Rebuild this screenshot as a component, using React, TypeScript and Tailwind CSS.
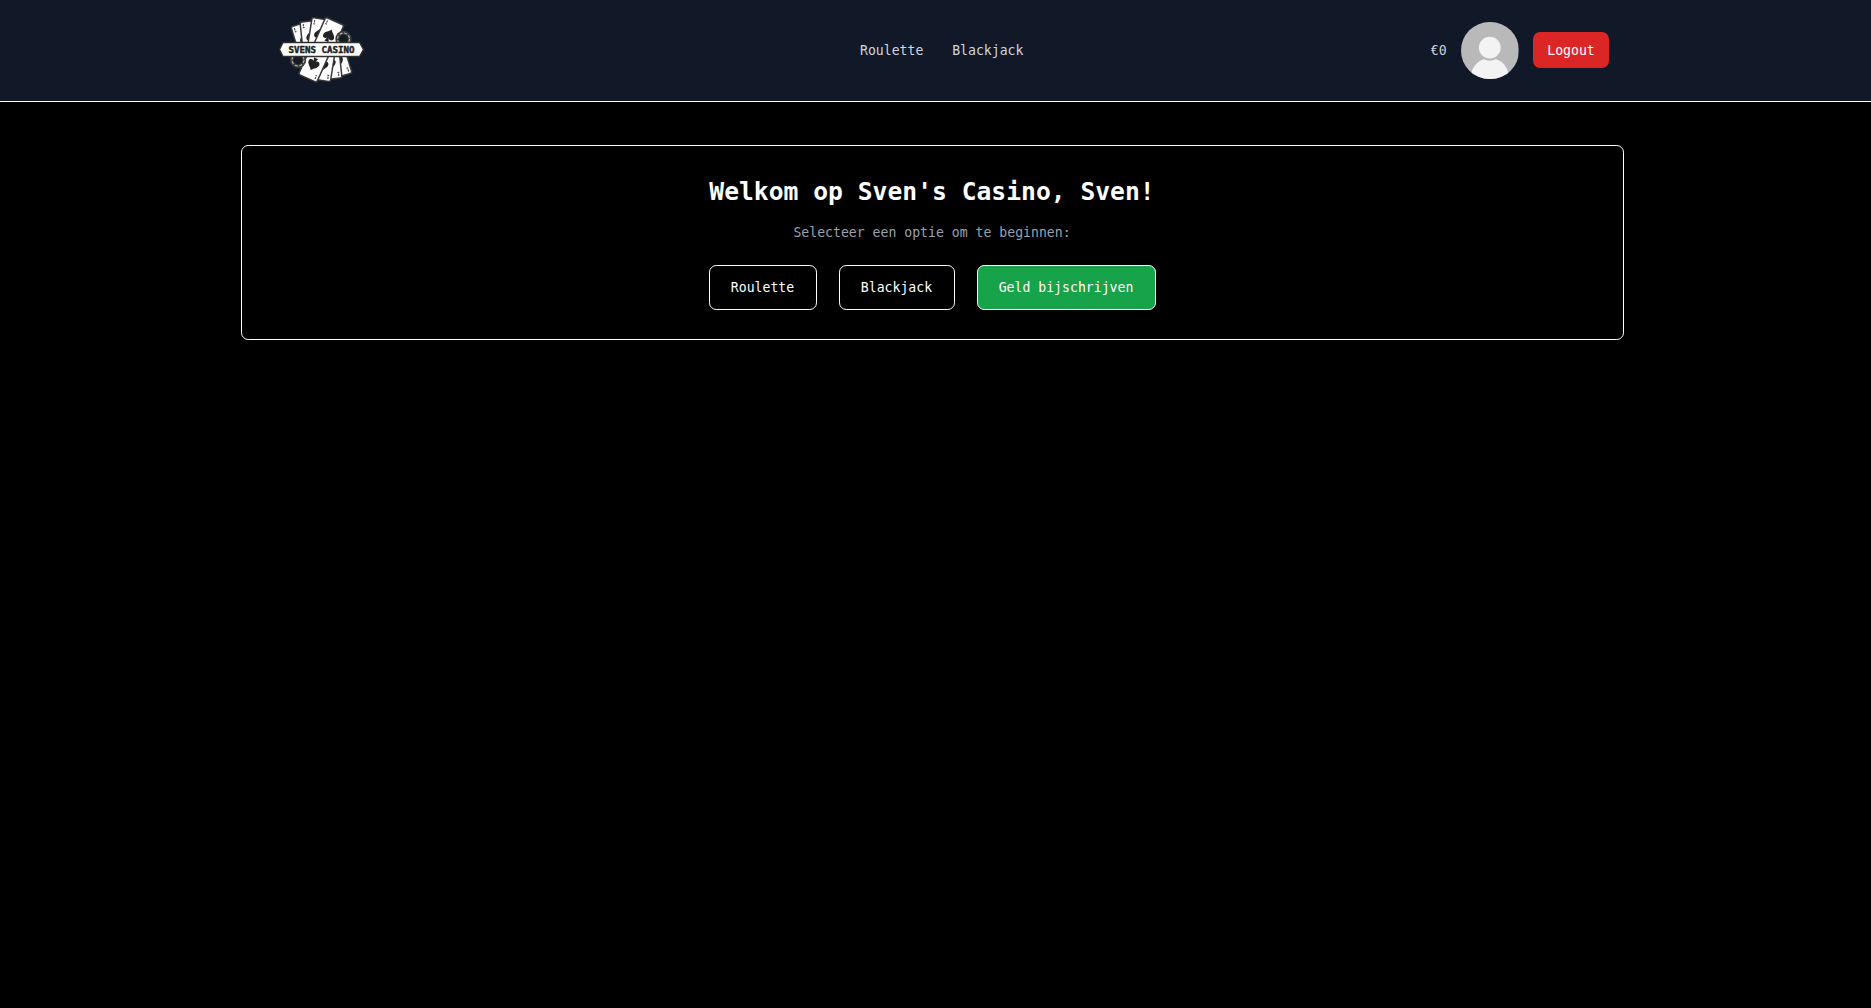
import React from "react";

const mono = "font-['DejaVu_Sans_Mono',monospace] text-[13.16px] leading-[21.6px]";

function Card({ transform }: { transform: string }) {
  return (
    <g transform={transform}>
      <rect x="-1.200" y="-1.200" width="21.400" height="31" rx="2" fill="#3a3a3a" />
      <rect x=".3" y=".3" width="18.400" height="28" rx="1.2" fill="#fff" />
      <path d="M2.500 1.800v2.400M1.700 5.500h1.800" stroke="#333" strokeWidth="1" />
      <path d="M10 8.300c-1.500 3-5.800 4.400-5.800 8 0 2.700 3.500 3.300 5 1.300L7.700 21.300h4.600l-1.500-3.700c1.500 2 5 1.300 5-1.300 0-3.600-4.300-5-5.800-8z" fill="#222" />
    </g>
  );
}

function Chip({ x, y }: { x: number; y: number }) {
  return (
    <g>
      <circle cx={x} cy={y} r="8.200" fill="#3a3a3a" />
      <circle cx={x} cy={y} r="6" fill="none" stroke="#b8b8b8" strokeWidth="1.100" strokeDasharray="3 1.700" />
      <circle cx={x} cy={y} r="4.300" fill="#161a22" />
    </g>
  );
}

function Logo() {
  return (
    <svg className="block h-[72px] w-[90px]" viewBox="0 0 90 72" role="img" aria-label="Svens Casino">
      <Card transform="translate(12.500 12.200) rotate(-17)" />
      <Card transform="translate(21.500 7.500) rotate(-6)" />
      <Card transform="translate(33.500 3) rotate(9)" />
      <Card transform="translate(47 2.800) rotate(24)" />
      <Card transform="translate(72.500 57.500) rotate(163)" />
      <Card transform="translate(62.500 62.500) rotate(174)" />
      <Card transform="translate(51 66.200) rotate(189)" />
      <Card transform="translate(37.500 66.800) rotate(204)" />
      <Chip x={64.500} y={24} />
      <Chip x={19} y={45} />
      <path d="M4 27.500h76.500l4 7-4 7H4l-3.500-7z" fill="#fff" stroke="#30302e" strokeWidth="1.400" />
      <text x="42.500" y="37.500" textAnchor="middle" textLength="66" lengthAdjust="spacingAndGlyphs" fontFamily="DejaVu Sans Mono, monospace" fontWeight="700" fontSize="8.200" fill="#222" stroke="#222" strokeWidth=".4">SVENS CASINO</text>
    </svg>
  );
}

function Avatar() {
  return (
    <svg className="block h-[57.600px] w-[57.600px] rounded-full" viewBox="0 0 58 58" aria-label="Profile">
      <rect width="58" height="58" fill="#b9b9b9" />
      <circle cx="29" cy="25.800" r="11" fill="#f3f3f3" />
      <path d="M9 58C10 46 17 39 23 37.500c4 2 8 2 12 0C42 39 48 46 49 58z" fill="#f3f3f3" />
    </svg>
  );
}

export default function App() {
  return (
    <div className={`min-h-screen bg-black text-white ${mono}`}>
      <header className="h-[102px] border-b border-white bg-[#111827]">
        <div className="mx-auto flex h-[101px] w-[1347px] items-center justify-between">
          <div className="w-[589px] pl-[17px]"><Logo /></div>
          <nav className="flex flex-1 gap-[28.800px] pl-[9px] text-gray-300">
            <a>Roulette</a>
            <a>Blackjack</a>
          </nav>
          <div className="flex items-center gap-[14.400px] text-gray-300">
            <span>€0</span>
            <Avatar />
            <button className="mb-px h-9 w-[76px] rounded-[7.200px] bg-[#dc2626] pt-0.5 text-white">Logout</button>
          </div>
        </div>
      </header>
      <main className="flex w-[1864px] justify-center pt-[43px]">
        <section className="flex h-[195px] w-[1383px] flex-col items-center rounded-[7.200px] border border-white pt-[28px]">
          <h1 className="text-[24.670px] font-bold leading-[36px]">Welkom op Sven's Casino, Sven!</h1>
          <p className="mt-[12px] text-gray-400">Selecteer een optie om te beginnen:</p>
          <div className="mt-[21px] flex gap-[22px]">
            <button className="h-[45px] w-[108px] rounded-[7.200px] border border-white pt-0.5">Roulette</button>
            <button className="h-[45px] w-[116px] rounded-[7.200px] border border-white pt-0.5">Blackjack</button>
            <button className="h-[45px] w-[179px] rounded-[7.200px] border border-white bg-[#16a34a] pt-0.5">Geld bijschrijven</button>
          </div>
        </section>
      </main>
    </div>
  );
}
